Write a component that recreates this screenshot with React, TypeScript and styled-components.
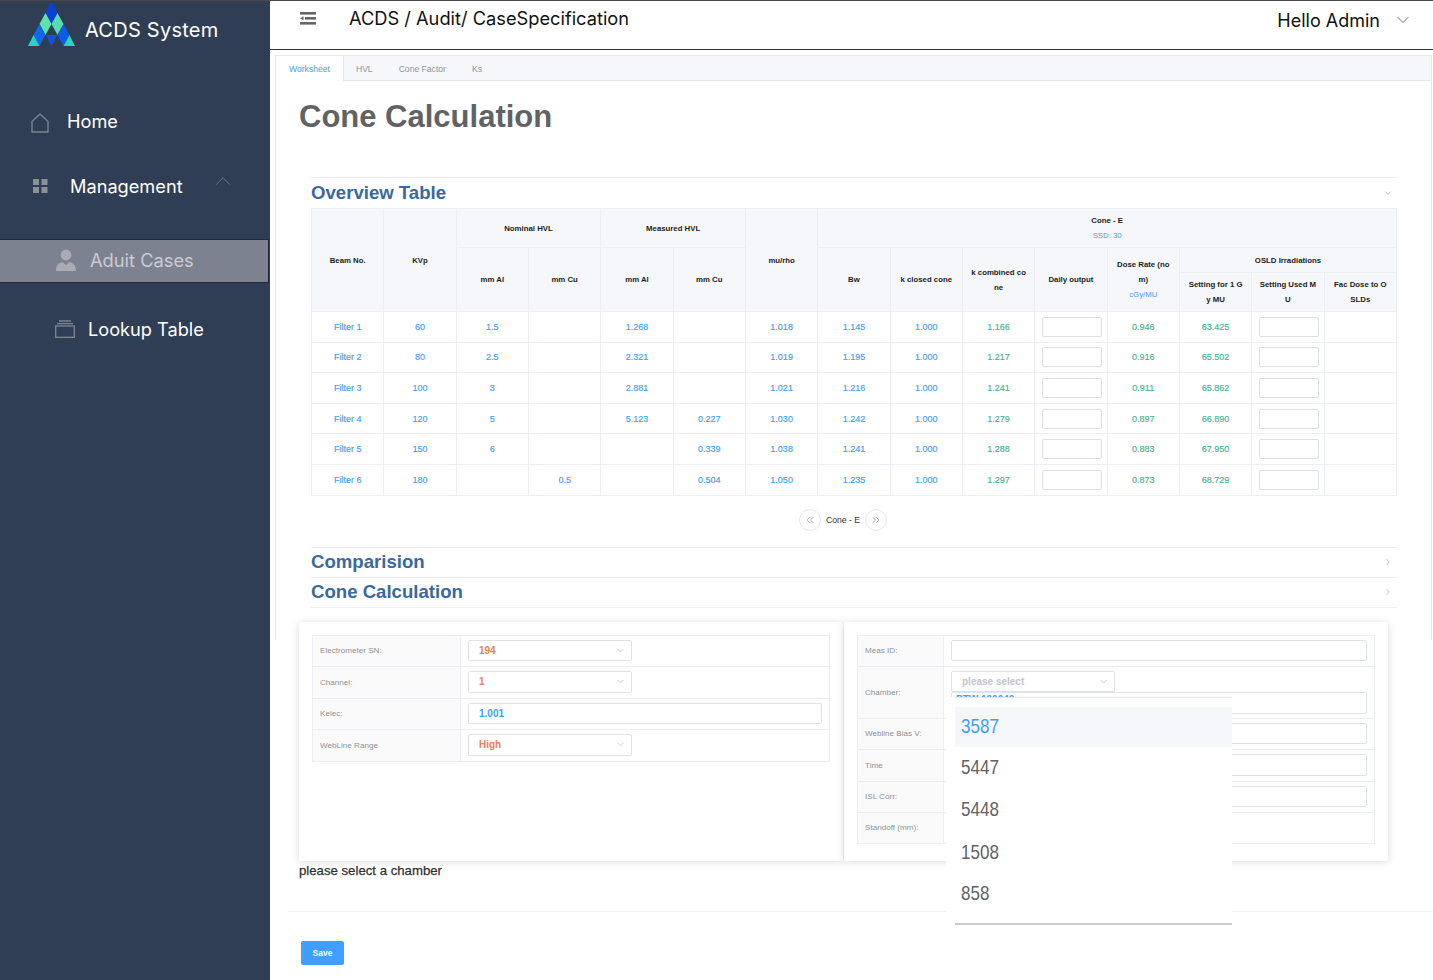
import { ChevronDown, ChevronRight, ChevronsLeft, ChevronsRight, ChevronUp } from "lucide-react";
import { createGlobalStyle, styled } from "styled-components";

const GlobalStyle = createGlobalStyle`
  html, body {
    margin: 0;
    padding: 0;
    background: #fff;
    font-family: "Liberation Sans", Arial, sans-serif;
  }
  * {
    box-sizing: border-box;
  }
`;

const Shell = styled.div`
  display: flex;
  width: 1433px;
  height: 980px;
  overflow: hidden;
  border-top: 1px solid #4a4a4a;
`;

const Sidebar = styled.aside`
  flex: 0 0 270px;
  display: flex;
  flex-direction: column;
  background: #2f3e54;
  font-family: Inter, sans-serif;
  color: #fff;
`;

const Brand = styled.div`
  display: flex;
  align-items: flex-start;
  gap: 10px;
  height: 100px;
  padding-left: 28px;
  font-size: 20px;
  letter-spacing: 0.25px;
  span {
    margin-top: 17px;
  }
`;

const NavItem = styled.div<{ $indent: number; $top: number; $gap: number }>`
  display: flex;
  align-items: center;
  gap: ${(props) => props.$gap}px;
  height: 40px;
  margin-top: ${(props) => props.$top}px;
  padding-left: ${(props) => props.$indent}px;
  font-size: 18.2px;
`;

const ActiveNavItem = styled.div`
  display: flex;
  align-items: center;
  gap: 14px;
  width: 269px;
  height: 44px;
  margin-top: 33px;
  padding: 0 0 2px 56px;
  background: #7c8290;
  border: 1px solid #1d2a3b;
  border-left: none;
  color: #c9ccd2;
  font-size: 18.3px;
`;

const NavArrow = styled.span`
  display: flex;
  margin: -10px 0 0 5px;
  color: #6b7585;
`;

const HomeGlyph = styled.svg`
  margin-top: 3px;
`;

const Main = styled.main`
  flex: 1;
  min-width: 0;
`;

const Header = styled.header`
  display: flex;
  align-items: flex-start;
  height: 49px;
  padding: 5px 20px 0 30px;
  border-bottom: 1px solid #333;
  font-family: Inter, sans-serif;
  color: #111;
`;

const MenuToggle = styled.span`
  display: flex;
  margin-top: 6px;
`;

const Breadcrumb = styled.div`
  flex: 1;
  margin-left: 33px;
  font-size: 18.25px;
  line-height: 25px;
`;

const UserMenu = styled.div`
  display: flex;
  align-items: center;
  gap: 13px;
  height: 28px;
  font-size: 18px;
`;

const TabCard = styled.section`
  width: 1157px;
  height: 585px;
  margin: 5px 0 0 5px;
  background: #fff;
  border: 1px solid #e4e7ed;
  border-bottom: none;
`;

const TabBar = styled.div`
  display: flex;
  height: 25px;
  background: #f5f7fa;
  border-bottom: 1px solid #e4e7ed;
`;

const Tab = styled.div<{ $active?: boolean }>`
  height: 25px;
  margin-right: -1px;
  padding: 0 13px;
  border-right: 1px solid ${(props) => (props.$active ? "#e4e7ed" : "transparent")};
  background: ${(props) => (props.$active ? "#fff" : "transparent")};
  color: ${(props) => (props.$active ? "#409eff" : "#909399")};
  font-size: 8.6px;
  line-height: 26px;
`;

const Content = styled.div`
  padding-left: 23px;
`;

const PageTitle = styled.h1`
  height: 36px;
  margin: 18px 0 42px;
  color: #606266;
  font-size: 31px;
  font-weight: bold;
  line-height: 36px;
`;

const Section = styled.div`
  margin: 0 34px 0 12px;
`;

const SectionHead = styled.div<{ $tall?: boolean; $last?: boolean }>`
  display: flex;
  align-items: center;
  justify-content: space-between;
  height: ${(props) => (props.$tall ? 31 : 30)}px;
  padding: 0 4px ${(props) => (props.$tall ? 1 : 0)}px 0;
  border-top: 1px solid #ebeef5;
  border-bottom: ${(props) => (props.$last ? "1px solid #ebeef5" : "none")};
  color: #38699f;
  font-size: 18.6px;
  font-weight: bold;
  svg {
    color: #909399;
  }
`;

const Table = styled.table`
  width: 1086px;
  table-layout: fixed;
  border-collapse: collapse;
  font-size: 9px;
  text-align: center;
  th,
  td {
    padding: 0 7px;
    border: 1px solid #ebeef5;
    word-break: break-all;
  }
  th {
    background: #f5f7fa;
    color: #1c1c1c;
    font-size: 7.8px;
    font-weight: bold;
    line-height: 15px;
  }
`;

const HeadRow = styled.tr<{ $height: number }>`
  height: ${(props) => props.$height}px;
`;

const DataRow = styled.tr`
  height: 30.6px;
`;

const ValueCell = styled.td<{ $tone: "blue" | "green" }>`
  color: ${(props) => (props.$tone === "blue" ? "#409eff" : "#3fb58f")};
  -webkit-text-stroke: 0.15px currentColor;
`;

const BlueNote = styled.div`
  color: #409eff;
  font-weight: normal;
`;

const CellInput = styled.input`
  display: block;
  width: 60px;
  height: 20px;
  margin: 0 auto;
  padding: 0;
  background: #fff;
  border: 1px solid #dcdfe6;
  border-radius: 2px;
`;

const Pager = styled.div`
  display: flex;
  align-items: flex-start;
  justify-content: center;
  gap: 5px;
  height: 51px;
  padding: 13px 22px 0 0;
  color: #303133;
  font-size: 8.6px;
  line-height: 22px;
`;

const PagerButton = styled.span`
  display: flex;
  align-items: center;
  justify-content: center;
  width: 22px;
  height: 22px;
  border: 1px solid #e4e7ed;
  border-radius: 50%;
  color: #909399;
`;

const PanelRow = styled.div`
  display: flex;
  gap: 1px;
  width: 1089px;
  margin-top: 14px;
`;

const Panel = styled.div`
  position: relative;
  width: 544px;
  height: 239px;
  padding: 13px;
  background: #fff;
  border-radius: 2px;
  box-shadow: 0 1px 8px rgba(0, 0, 0, 0.14);
`;

const Fields = styled.div`
  border-top: 1px solid #ebeef5;
  border-right: 1px solid #ebeef5;
`;

const FieldRow = styled.div<{ $labelWidth: number; $height: number }>`
  display: grid;
  grid-template-columns: ${(props) => props.$labelWidth}px 1fr;
  height: ${(props) => props.$height}px;
  border-bottom: 1px solid #ebeef5;
`;

const FieldLabel = styled.div`
  display: flex;
  align-items: center;
  padding-left: 7px;
  background: #fafafa;
  border-left: 1px solid #ebeef5;
  border-right: 1px solid #ebeef5;
  color: #8f9196;
  font-size: 8.1px;
`;

const FieldBody = styled.div`
  display: flex;
  flex-direction: column;
  padding: 4px 7px 0 7px;
`;

const SelectBox = styled.div<{ $tone: "orange" | "muted" }>`
  display: flex;
  flex: 0 0 21.5px;
  align-items: center;
  justify-content: space-between;
  width: 164px;
  padding: 0 5px 0 10px;
  border: 1px solid #dfe2e8;
  border-radius: 2px;
  background: #fff;
  color: ${(props) => (props.$tone === "orange" ? "#f47c52" : "#c0c4cc")};
  font-size: 10px;
  font-weight: bold;
  svg {
    color: #a8abb2;
  }
`;

const TextBox = styled.div`
  display: flex;
  flex: 0 0 21.5px;
  align-items: center;
  padding-left: 10px;
  border: 1px solid #dfe2e8;
  border-radius: 2px;
  background: #fff;
  color: #409eff;
  font-size: 10px;
  font-weight: bold;
`;

const BehindBox = styled(TextBox)`
  align-items: flex-start;
  padding: 2px 0 0 4px;
  line-height: 10px;
`;

const Dropdown = styled.div`
  position: absolute;
  top: 75px;
  left: 102px;
  width: 286px;
  height: 228px;
  padding-left: 9px;
  background: #fff;
`;

const OptionList = styled.ul`
  height: 228px;
  margin: 0;
  padding: 9px 0 0;
  border-top: 1px solid #e4e7ed;
  border-bottom: 2px solid #c9cace;
  list-style: none;
`;

const Option = styled.li<{ $active?: boolean; $height: number }>`
  display: flex;
  align-items: center;
  height: ${(props) => props.$height}px;
  padding: 0 0 2px 6px;
  background: ${(props) => (props.$active ? "#f5f7fa" : "transparent")};
  color: ${(props) => (props.$active ? "#409eff" : "#606266")};
  font-size: 21px;
  span {
    transform: scaleX(0.81);
    transform-origin: left center;
  }
`;

const Note = styled.div`
  margin-top: 1px;
  color: #303133;
  font-size: 13.2px;
  line-height: 18px;
  -webkit-text-stroke: 0.25px currentColor;
`;

const Divider = styled.hr`
  height: 1px;
  margin: 31px -2px 0 -11px;
  border: none;
  background: #f0f1f4;
`;

const SaveButton = styled.button`
  display: block;
  width: 43px;
  height: 24px;
  margin: 29px 0 0 2px;
  padding: 0;
  background: #409eff;
  border: none;
  border-radius: 2px;
  color: #fff;
  font-family: inherit;
  font-size: 8.5px;
  font-weight: bold;
`;

const Logo = () => (
  <svg width="47" height="46" viewBox="0 0 47 46">
    <polygon points="23.5,0 29.5,12 23.5,23 17.5,12" fill="#0b3fd6" />
    <polygon points="17.5,12 23.5,23 17.5,34 11.5,23" fill="#5fe3ae" />
    <polygon points="29.5,12 35.5,23 29.5,34 23.5,23" fill="#55dcb0" />
    <polygon points="11.5,23 17.5,34 11.5,45 5.5,34" fill="#1268ea" />
    <polygon points="35.5,23 41.5,34 35.5,45 29.5,34" fill="#0d5ce6" />
    <polygon points="5.5,34 11.5,45 0,45" fill="#2dd0c6" />
    <polygon points="41.5,34 47,45 35.5,45" fill="#2dd0c6" />
    <polygon points="17.5,34 29.5,34 23.5,45" fill="#1552d8" />
  </svg>
);

const HomeIcon = () => (
  <HomeGlyph width="18" height="20" viewBox="0 0 18 20" fill="none" stroke="#7a8492" strokeWidth="1.4">
    <path d="M1 8.500 9 1l8 7.500V19H1z" strokeLinejoin="round" />
  </HomeGlyph>
);

const GridIcon = () => (
  <svg width="15" height="14" viewBox="0 0 15 14" fill="#8b909a">
    <rect x="0" y="0" width="6" height="6" />
    <rect x="8.500" y="0" width="6" height="6" />
    <rect x="0" y="8" width="6" height="6" />
    <rect x="8.500" y="8" width="6" height="6" />
  </svg>
);

const PersonIcon = () => (
  <svg width="20" height="22" viewBox="0 0 20 22" fill="#a9acb3">
    <circle cx="10" cy="6" r="5.400" />
    <path d="M0 22c0-5 2-8 6.500-9l3.500 3 3.500-3c4.500 1 6.500 4 6.500 9z" />
  </svg>
);

const StackIcon = () => (
  <svg width="20" height="18" viewBox="0 0 20 18" fill="none" stroke="#7f8794" strokeWidth="1.3">
    <rect x="0.700" y="6" width="18.600" height="11.300" />
    <path d="M2 3.600h16M4 1h12" />
  </svg>
);

const CollapseIcon = () => (
  <svg width="16" height="13" viewBox="0 0 16 13" fill="#666">
    <rect x="0" y="0" width="16" height="2.600" />
    <rect x="5" y="5" width="11" height="2.600" />
    <rect x="0" y="10" width="16" height="2.600" />
    <polygon points="0,6.300 3.500,4.200 3.500,8.400" />
  </svg>
);

const rows = [
  { cells: ["Filter 1", "60", "1.5", "", "1.268", "", "1.018", "1.145", "1.000"], combined: "1.166", doseRate: "0.946", setting: "63.425" },
  { cells: ["Filter 2", "80", "2.5", "", "2.321", "", "1.019", "1.195", "1.000"], combined: "1.217", doseRate: "0.916", setting: "65.502" },
  { cells: ["Filter 3", "100", "3", "", "2.881", "", "1.021", "1.216", "1.000"], combined: "1.241", doseRate: "0.911", setting: "65.862" },
  { cells: ["Filter 4", "120", "5", "", "5.123", "0.227", "1.030", "1.242", "1.000"], combined: "1.279", doseRate: "0.897", setting: "66.890" },
  { cells: ["Filter 5", "150", "6", "", "", "0.339", "1.038", "1.241", "1.000"], combined: "1.288", doseRate: "0.883", setting: "67.950" },
  { cells: ["Filter 6", "180", "", "0.5", "", "0.504", "1.050", "1.235", "1.000"], combined: "1.297", doseRate: "0.873", setting: "68.729" },
];

const chamberOptions = [
  { label: "3587", height: 40, active: true },
  { label: "5447", height: 42 },
  { label: "5448", height: 43 },
  { label: "1508", height: 42 },
  { label: "858", height: 41 },
];

const App = () => {
  return (
    <Shell>
      <GlobalStyle />
      <Sidebar>
        <Brand>
          <Logo />
          <span>ACDS System</span>
        </Brand>
        <NavItem $indent={31} $top={0} $gap={18}>
          <HomeIcon />
          Home
        </NavItem>
        <NavItem $indent={33} $top={25} $gap={22}>
          <GridIcon />
          Management
          <NavArrow>
            <ChevronUp size={26} strokeWidth={0.9} />
          </NavArrow>
        </NavItem>
        <ActiveNavItem>
          <PersonIcon />
          Aduit Cases
        </ActiveNavItem>
        <NavItem $indent={55} $top={26} $gap={13}>
          <StackIcon />
          Lookup Table
        </NavItem>
      </Sidebar>

      <Main>
        <Header>
          <MenuToggle>
            <CollapseIcon />
          </MenuToggle>
          <Breadcrumb>ACDS / Audit/ CaseSpecification</Breadcrumb>
          <UserMenu>
            Hello Admin
            <ChevronDown size={20} strokeWidth={1} color="#555" />
          </UserMenu>
        </Header>

        <TabCard>
          <TabBar>
            <Tab $active>Worksheet</Tab>
            <Tab>HVL</Tab>
            <Tab>Cone Factor</Tab>
            <Tab>Ks</Tab>
          </TabBar>
          <Content>
            <PageTitle>Cone Calculation</PageTitle>
            <Section>
              <SectionHead $tall>
                Overview Table
                <ChevronDown size={10} strokeWidth={1.3} />
              </SectionHead>
              <Table>
                <thead>
                  <HeadRow $height={39}>
                    <th rowSpan={3}>Beam No.</th>
                    <th rowSpan={3}>KVp</th>
                    <th colSpan={2}>Nominal HVL</th>
                    <th colSpan={2}>Measured HVL</th>
                    <th rowSpan={3}>mu/rho</th>
                    <th colSpan={8}>
                      Cone - E
                      <BlueNote>SSD: 30</BlueNote>
                    </th>
                  </HeadRow>
                  <HeadRow $height={25}>
                    <th rowSpan={2}>mm Al</th>
                    <th rowSpan={2}>mm Cu</th>
                    <th rowSpan={2}>mm Al</th>
                    <th rowSpan={2}>mm Cu</th>
                    <th rowSpan={2}>Bw</th>
                    <th rowSpan={2}>k closed cone</th>
                    <th rowSpan={2}>k combined cone</th>
                    <th rowSpan={2}>Daily output</th>
                    <th rowSpan={2}>
                      Dose Rate (no
                      <br />
                      m)
                      <BlueNote>cGy/MU</BlueNote>
                    </th>
                    <th colSpan={3}>OSLD Irradiations</th>
                  </HeadRow>
                  <HeadRow $height={39}>
                    <th>Setting for 1 Gy MU</th>
                    <th>Setting Used MU</th>
                    <th>Fac Dose to OSLDs</th>
                  </HeadRow>
                </thead>
                <tbody>
                  {rows.map((row) => (
                    <DataRow key={row.cells[0]}>
                      {row.cells.map((cell, i) => (
                        <ValueCell key={i} $tone="blue">
                          {cell}
                        </ValueCell>
                      ))}
                      <ValueCell $tone="green">{row.combined}</ValueCell>
                      <td>
                        <CellInput readOnly />
                      </td>
                      <ValueCell $tone="green">{row.doseRate}</ValueCell>
                      <ValueCell $tone="green">{row.setting}</ValueCell>
                      <td>
                        <CellInput readOnly />
                      </td>
                      <td />
                    </DataRow>
                  ))}
                </tbody>
              </Table>
              <Pager>
                <PagerButton>
                  <ChevronsLeft size={12} strokeWidth={1.3} />
                </PagerButton>
                Cone - E
                <PagerButton>
                  <ChevronsRight size={12} strokeWidth={1.3} />
                </PagerButton>
              </Pager>
              <SectionHead>
                Comparision
                <ChevronRight size={10} strokeWidth={1.3} />
              </SectionHead>
              <SectionHead $tall $last>
                Cone Calculation
                <ChevronRight size={10} strokeWidth={1.3} />
              </SectionHead>
            </Section>

            <PanelRow>
              <Panel>
                <Fields>
                  <FieldRow $labelWidth={149} $height={31.5}>
                    <FieldLabel>Electrometer SN:</FieldLabel>
                    <FieldBody>
                      <SelectBox $tone="orange">
                        194
                        <ChevronDown size={11} strokeWidth={1.2} />
                      </SelectBox>
                    </FieldBody>
                  </FieldRow>
                  <FieldRow $labelWidth={149} $height={31.5}>
                    <FieldLabel>Channel:</FieldLabel>
                    <FieldBody>
                      <SelectBox $tone="orange">
                        1
                        <ChevronDown size={11} strokeWidth={1.2} />
                      </SelectBox>
                    </FieldBody>
                  </FieldRow>
                  <FieldRow $labelWidth={149} $height={31.5}>
                    <FieldLabel>Kelec:</FieldLabel>
                    <FieldBody>
                      <TextBox>1.001</TextBox>
                    </FieldBody>
                  </FieldRow>
                  <FieldRow $labelWidth={149} $height={31.5}>
                    <FieldLabel>WebLine Range</FieldLabel>
                    <FieldBody>
                      <SelectBox $tone="orange">
                        High
                        <ChevronDown size={11} strokeWidth={1.2} />
                      </SelectBox>
                    </FieldBody>
                  </FieldRow>
                </Fields>
              </Panel>

              <Panel>
                <Fields>
                  <FieldRow $labelWidth={87} $height={31}>
                    <FieldLabel>Meas ID:</FieldLabel>
                    <FieldBody>
                      <TextBox />
                    </FieldBody>
                  </FieldRow>
                  <FieldRow $labelWidth={87} $height={52}>
                    <FieldLabel>Chamber:</FieldLabel>
                    <FieldBody>
                      <SelectBox $tone="muted">
                        please select
                        <ChevronDown size={11} strokeWidth={1.2} />
                      </SelectBox>
                      <BehindBox>PTW 100040</BehindBox>
                    </FieldBody>
                  </FieldRow>
                  <FieldRow $labelWidth={87} $height={31.5}>
                    <FieldLabel>Webline Bias V:</FieldLabel>
                    <FieldBody>
                      <TextBox />
                    </FieldBody>
                  </FieldRow>
                  <FieldRow $labelWidth={87} $height={31.5}>
                    <FieldLabel>Time</FieldLabel>
                    <FieldBody>
                      <TextBox />
                    </FieldBody>
                  </FieldRow>
                  <FieldRow $labelWidth={87} $height={31}>
                    <FieldLabel>ISL Corr:</FieldLabel>
                    <FieldBody>
                      <TextBox />
                    </FieldBody>
                  </FieldRow>
                  <FieldRow $labelWidth={87} $height={31.5}>
                    <FieldLabel>Standoff (mm):</FieldLabel>
                    <FieldBody />
                  </FieldRow>
                </Fields>
                <Dropdown>
                  <OptionList>
                    {chamberOptions.map((option) => (
                      <Option key={option.label} $active={option.active} $height={option.height}>
                        <span>{option.label}</span>
                      </Option>
                    ))}
                  </OptionList>
                </Dropdown>
              </Panel>
            </PanelRow>

            <Note>please select a chamber</Note>
            <Divider />
            <SaveButton>Save</SaveButton>
          </Content>
        </TabCard>
      </Main>
    </Shell>
  );
};

export default App;
